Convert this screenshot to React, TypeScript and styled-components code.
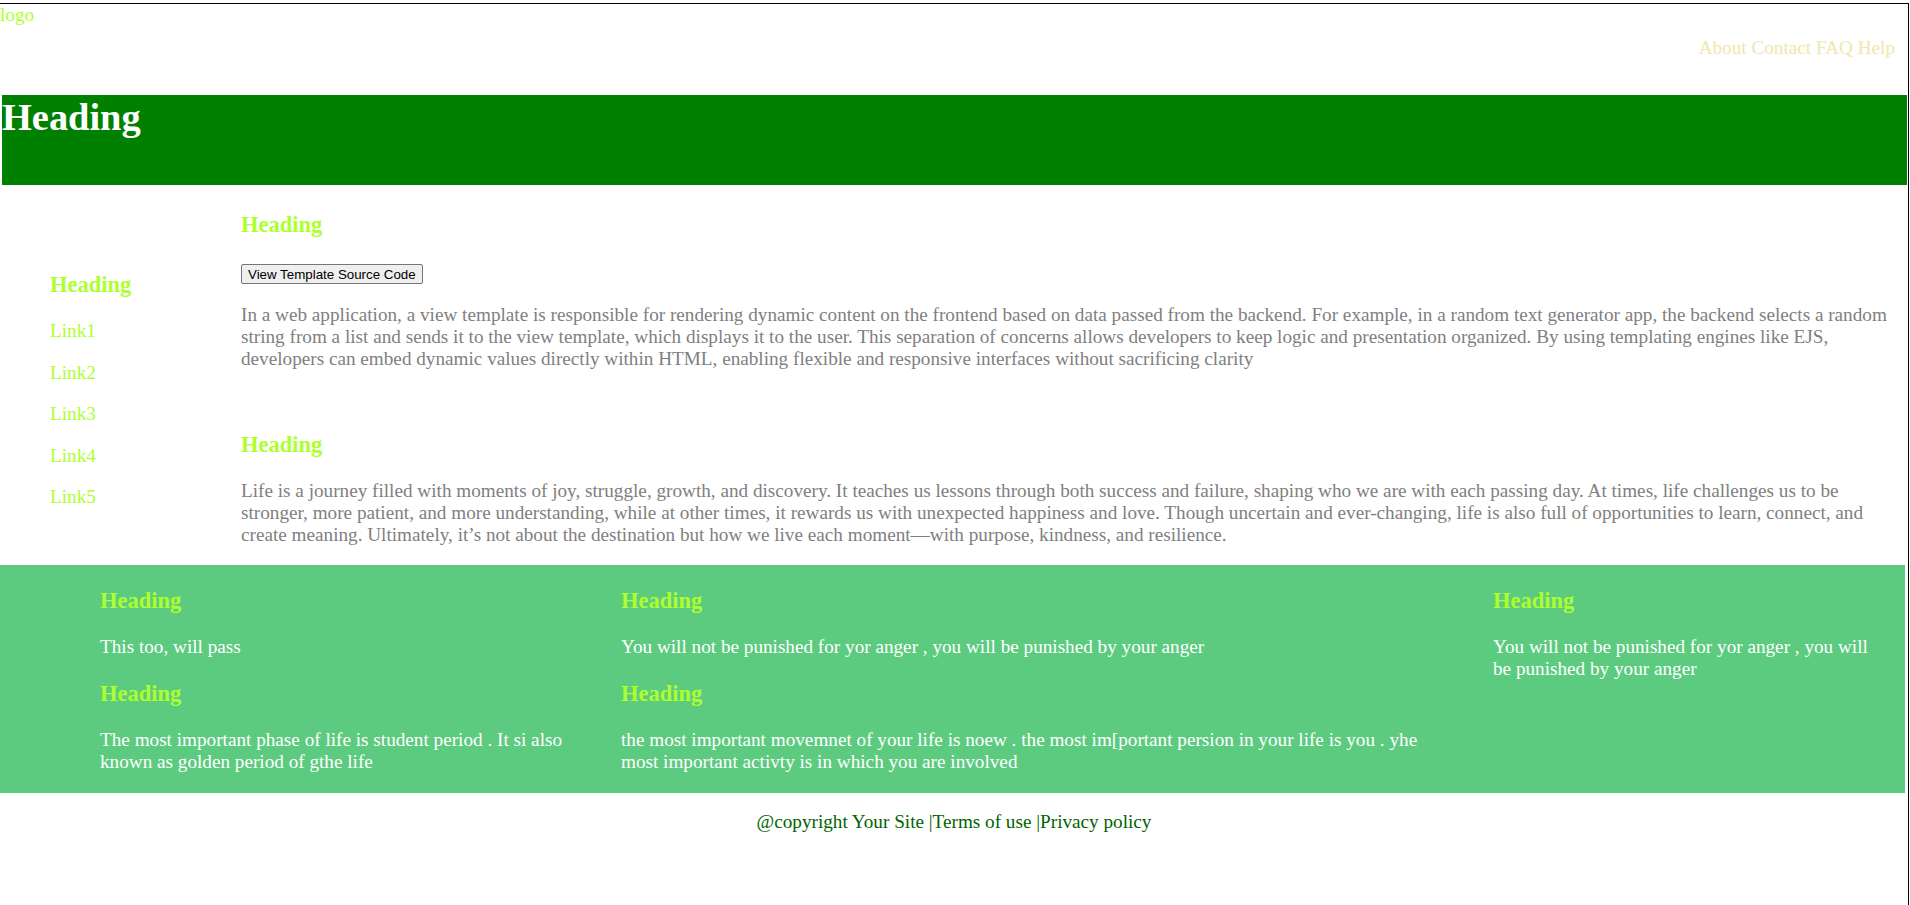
import styled, { createGlobalStyle } from "styled-components";

const GlobalStyle = createGlobalStyle`
  * {
    box-sizing: border-box;
  }
  html, body {
    margin: 0;
    padding: 0;
    background: #fff;
  }
  body {
    font-family: "Liberation Serif", "Times New Roman", serif;
    font-size: 19.2px;
    line-height: normal;
  }
`;

const Page = styled.div`
  margin: 3px 1px 0 0;
  min-height: calc(100vh - 3px);
  border-top: 1px solid #000;
  border-right: 1px solid #000;
`;

const Header = styled.header`
  display: flex;
  flex-direction: column;
  margin-bottom: 36px;
`;

const Logo = styled.div`
  color: #adff2f;
`;

const Nav = styled.nav`
  align-self: flex-end;
  margin-top: 11px;
  padding-right: 13px;
`;

const NavLink = styled.a`
  color: #eee8aa;
  text-decoration: none;
  cursor: pointer;
`;

const Banner = styled.section`
  height: 90px;
  margin: 0 1px 0 2px;
  background: #008000;
`;

const BannerTitle = styled.h1`
  margin: 0;
  font-size: 38.4px;
  font-weight: bold;
  color: #fff;
`;

const Content = styled.div`
  display: flex;
  align-items: flex-start;
`;

const Sidebar = styled.aside`
  width: 241px;
  flex-shrink: 0;
  padding: 64px 0 0 50px;
`;

const Heading = styled.h3`
  margin: 22.5px 0;
  font-size: 22.5px;
  font-weight: bold;
  color: #adff2f;
`;

const SideLink = styled.a`
  display: block;
  margin: 19.6px 0;
  color: #adff2f;
  text-decoration: none;
  cursor: pointer;
`;

const Main = styled.main`
  flex: 1;
  padding: 4px 6px 0 0;
`;

const Article = styled.section<{ $spaced?: boolean }>`
  padding-top: ${(p) => (p.$spaced ? "20px" : "0")};
`;

const ButtonRow = styled.div`
  margin-top: 24px;
`;

const SourceButton = styled.button`
  font-family: "Liberation Sans", Arial, sans-serif;
  font-size: 13.33px;
  padding: 1px 6px;
  height: 20px;
  color: #000;
  background: #efefef;
  border: 1px solid #767676;
  border-radius: 2px;
  cursor: pointer;
`;

const Text = styled.p`
  margin: 20px 0 19.2px;
  color: #808080;
`;

const Footer = styled.footer`
  display: flex;
  align-items: flex-start;
  margin-right: 3px;
  padding-left: 100px;
  background: #5ccb7f;
`;

const FooterColumn = styled.div<{ $width: number; $gap: number }>`
  width: ${(p) => p.$width}px;
  margin-right: ${(p) => p.$gap}px;
  flex-shrink: 0;
`;

const FooterText = styled.p`
  margin: 19.2px 0;
  color: #fff;
`;

const Copyright = styled.p`
  margin: 18px 0;
  text-align: center;
  color: #006400;
`;

const links = ["Link1", "Link2", "Link3", "Link4", "Link5"];

const footerColumns = [
  {
    width: 490,
    gap: 31,
    items: [
      "This too, will pass",
      "The most important phase of life is student period . It si also known as golden period of gthe life",
    ],
  },
  {
    width: 815,
    gap: 57,
    items: [
      "You will not be punished for yor anger , you will be punished by your anger",
      "the most important movemnet of your life is noew . the most im[portant persion in your life is you . yhe most important activty is in which you are involved",
    ],
  },
  {
    width: 385,
    gap: 0,
    items: [
      "You will not be punished for yor anger , you will be punished by your anger",
    ],
  },
];

export default function App() {
  return (
    <>
      <GlobalStyle />
      <Page>
        <Header>
          <Logo>logo</Logo>
          <Nav>
            <NavLink>About</NavLink> <NavLink>Contact</NavLink>{" "}
            <NavLink>FAQ</NavLink> <NavLink>Help</NavLink>
          </Nav>
        </Header>

        <Banner>
          <BannerTitle>Heading</BannerTitle>
        </Banner>

        <Content>
          <Sidebar>
            <Heading>Heading</Heading>
            {links.map((l) => (
              <SideLink key={l}>{l}</SideLink>
            ))}
          </Sidebar>

          <Main>
            <Article>
              <Heading>Heading</Heading>
              <ButtonRow>
                <SourceButton>View Template Source Code</SourceButton>
              </ButtonRow>
              <Text>
                In a web application, a view template is responsible for rendering
                dynamic content on the frontend based on data passed from the
                backend. For example, in a random text generator app, the backend
                selects a random string from a list and sends it to the view
                template, which displays it to the user. This separation of concerns
                allows developers to keep logic and presentation organized. By using
                templating engines like EJS, developers can embed dynamic values
                directly within HTML, enabling flexible and responsive interfaces
                without sacrificing clarity
              </Text>
            </Article>
            <Article $spaced>
              <Heading>Heading</Heading>
              <Text>
                Life is a journey filled with moments of joy, struggle, growth, and
                discovery. It teaches us lessons through both success and failure,
                shaping who we are with each passing day. At times, life challenges
                us to be stronger, more patient, and more understanding, while at
                other times, it rewards us with unexpected happiness and love. Though
                uncertain and ever-changing, life is also full of opportunities to
                learn, connect, and create meaning. Ultimately, it’s not about the
                destination but how we live each moment—with purpose, kindness, and
                resilience.
              </Text>
            </Article>
          </Main>
        </Content>

        <Footer>
          {footerColumns.map((col, i) => (
            <FooterColumn key={i} $width={col.width} $gap={col.gap}>
              {col.items.map((t, j) => (
                <div key={j}>
                  <Heading>Heading</Heading>
                  <FooterText>{t}</FooterText>
                </div>
              ))}
            </FooterColumn>
          ))}
        </Footer>

        <Copyright>@copyright Your Site |Terms of use |Privacy policy</Copyright>
      </Page>
    </>
  );
}
